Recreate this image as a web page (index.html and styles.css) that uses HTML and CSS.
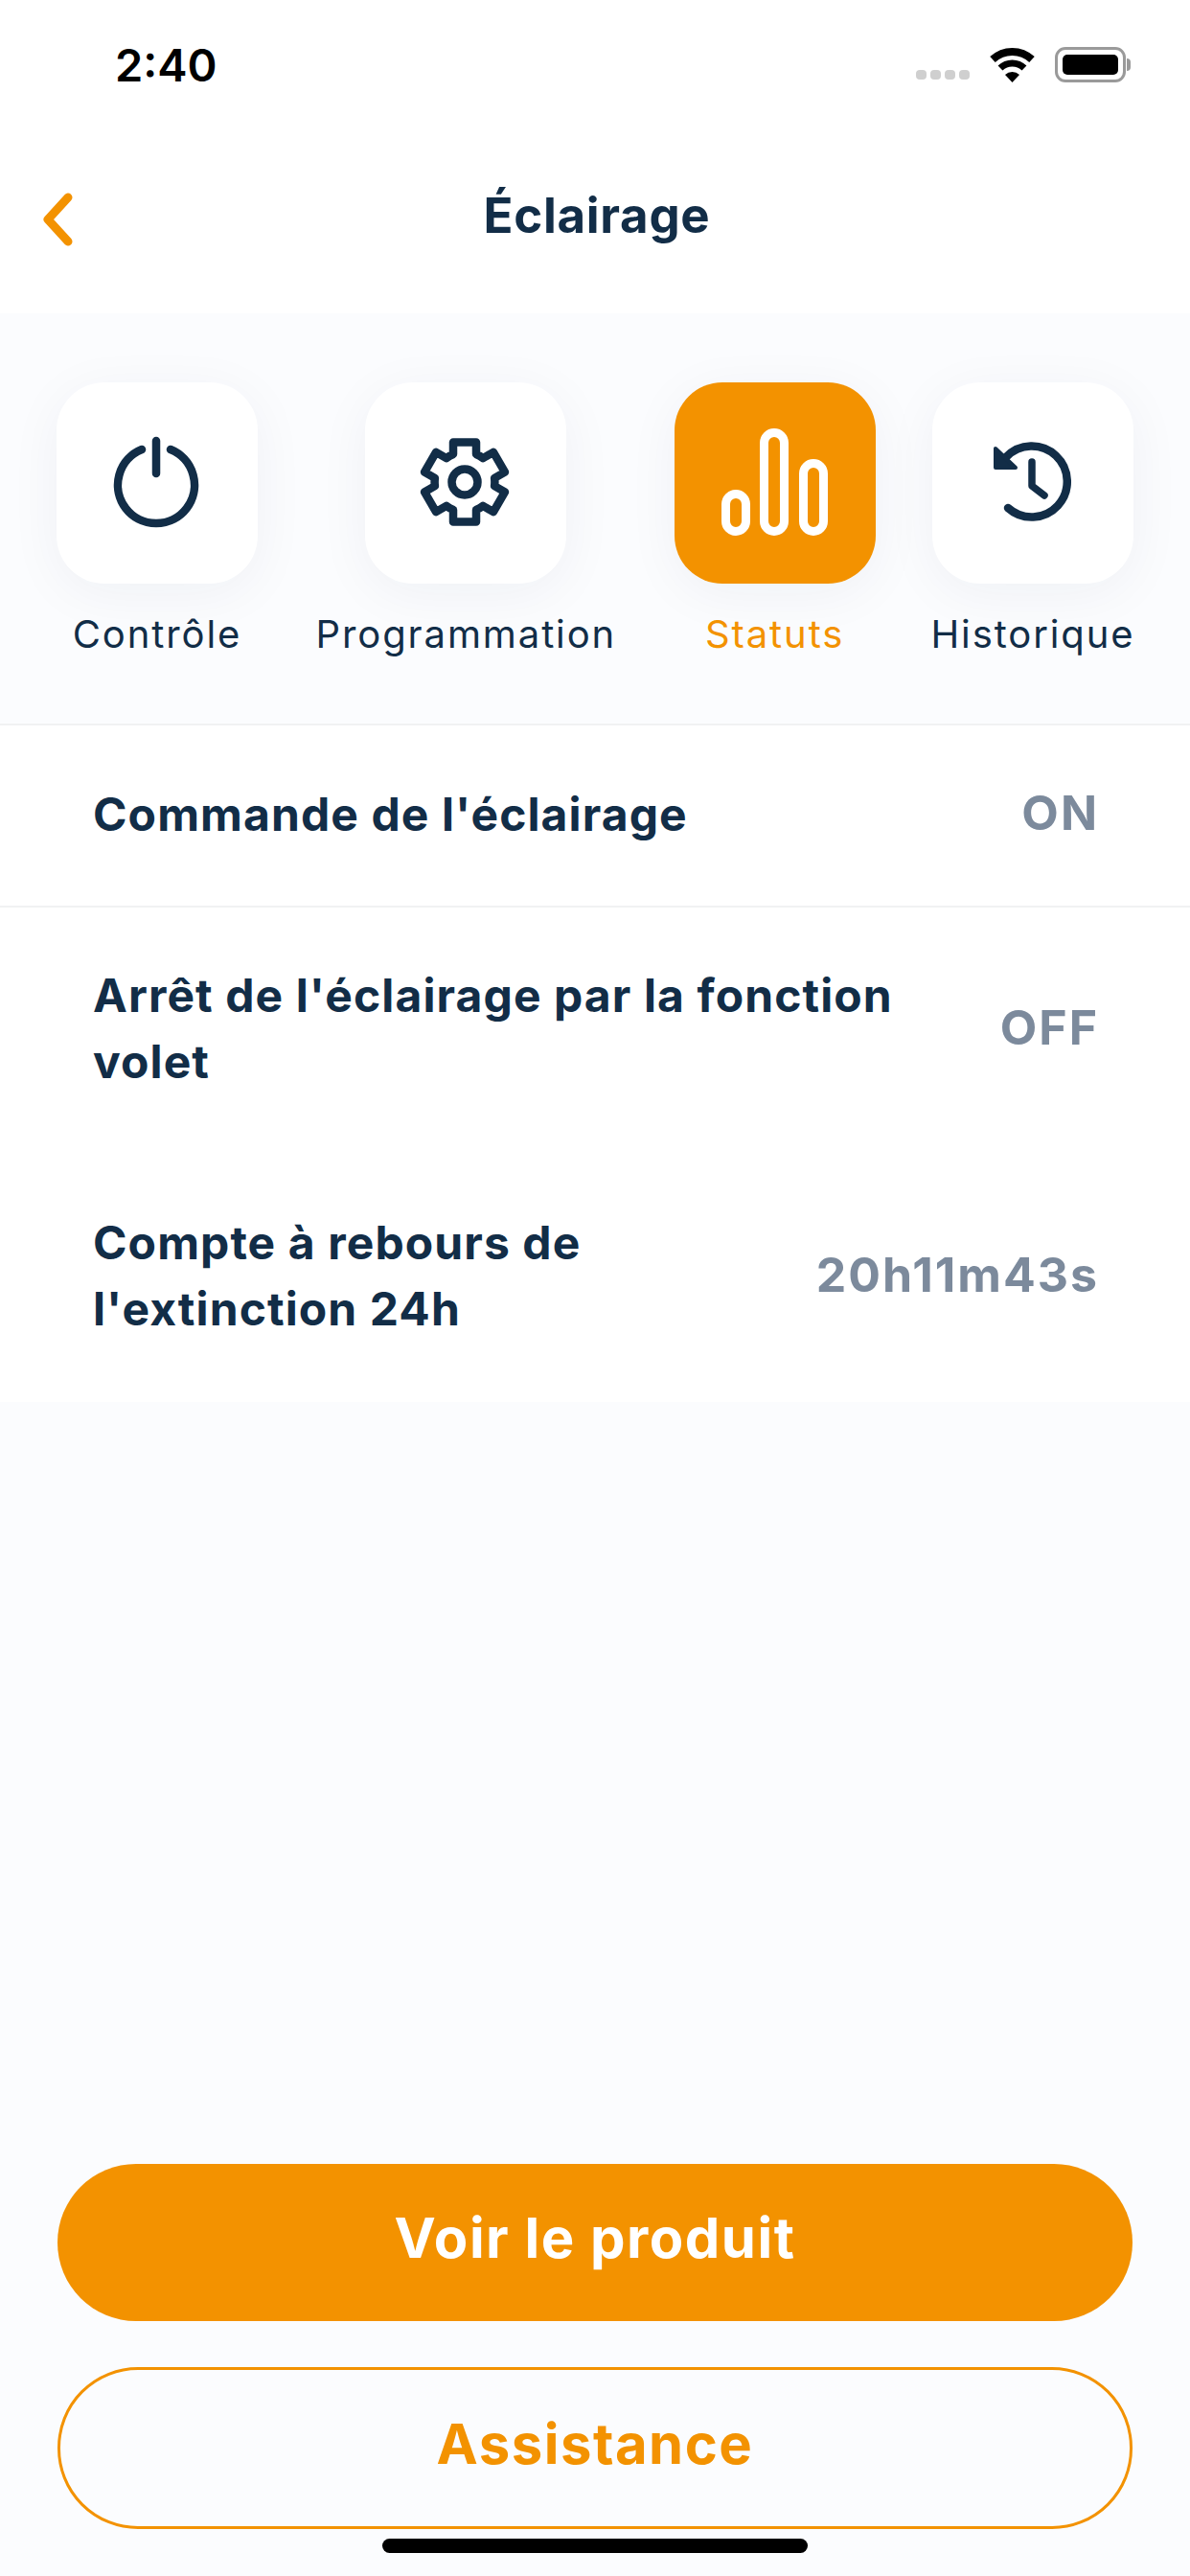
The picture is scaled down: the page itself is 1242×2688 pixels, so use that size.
FILE: index.html
```html
<!DOCTYPE html>
<html lang="fr">

<head>
  <meta charset="UTF-8">
  <meta name="viewport" content="width=device-width, initial-scale=1.0">
  <title>Éclairage</title>
  <link rel="stylesheet" href="styles.css">
</head>

<body>
  <div class="page">
    <header class="top">
      <div class="status">
        <span class="time">2:40</span>
        <div class="status-icons">
          <div class="signal"><i></i><i></i><i></i><i></i></div>
          <svg class="wifi" width="47" height="37" viewBox="0 0 47 37">
            <path d="M3 13 A30 30 0 0 1 44 13" fill="none" stroke="#000" stroke-width="8" />
            <path d="M11 22 A18 18 0 0 1 36 22" fill="none" stroke="#000" stroke-width="7" />
            <path d="M16 29 L23.500 37 L31 29 A11 11 0 0 0 16 29 Z" fill="#000" />
          </svg>
          <div class="battery"><div class="battery-level"></div></div>
        </div>
      </div>
      <nav class="nav">
        <svg class="back" width="34" height="56" viewBox="0 0 34 56">
          <path d="M28 5 L7 28 L28 51" fill="none" stroke="#f39200" stroke-width="9" stroke-linecap="round" stroke-linejoin="round" />
        </svg>
        <h1 class="title">Éclairage</h1>
      </nav>
    </header>

    <section class="tabs">
      <div class="tab">
        <div class="tile">
          <svg width="210" height="210" viewBox="0 0 210 210" fill="none" stroke="#122d47" stroke-width="8.500" stroke-linecap="round">
            <path d="M89 70 A40 40 0 1 0 119 70" />
            <path d="M104 61 V95" />
          </svg>
        </div>
        <span class="tab-label">Contrôle</span>
      </div>
      <div class="tab tab-wide">
        <div class="tile">
          <svg width="210" height="210" viewBox="0 0 210 210" fill="none" stroke="#122d47" stroke-width="8.500" stroke-linejoin="round">
            <g transform="translate(104 104)">
              <path d="M-12 -29 L-12 -41.500 L12 -41.500 L12 -29 A31.400 31.400 0 0 1 19.110 -24.890 L29.940 -31.140 L41.940 -10.360 L31.110 -4.110 A31.400 31.400 0 0 1 31.110 4.110 L41.940 10.360 L29.940 31.140 L19.110 24.890 A31.400 31.400 0 0 1 12 29 L12 41.500 L-12 41.500 L-12 29 A31.400 31.400 0 0 1 -19.110 24.890 L-29.940 31.140 L-41.940 10.360 L-31.110 4.110 A31.400 31.400 0 0 1 -31.110 -4.110 L-41.940 -10.360 L-29.940 -31.140 L-19.110 -24.890 A31.400 31.400 0 0 1 -12 -29 Z" />
              <circle r="13.500" />
            </g>
          </svg>
        </div>
        <span class="tab-label">Programmation</span>
      </div>
      <div class="tab tab-active">
        <div class="tile">
          <svg width="210" height="210" viewBox="0 0 210 210" fill="none" stroke="#fff" stroke-width="9">
            <rect x="53.500" y="116.500" width="21" height="39" rx="10.500" />
            <rect x="93.500" y="52.500" width="21" height="103" rx="10.500" />
            <rect x="134.500" y="84.500" width="21" height="71" rx="10.500" />
          </svg>
        </div>
        <span class="tab-label">Statuts</span>
      </div>
      <div class="tab">
        <div class="tile">
          <svg width="210" height="210" viewBox="0 0 210 210" fill="none" stroke="#122d47" stroke-width="8.500" stroke-linecap="round" stroke-linejoin="round">
            <path d="M77 78 A37 37 0 1 1 79 131" />
            <path d="M104 83 V108 L117 118" stroke-width="7.500" />
            <path d="M66 69 V89 H87 Z" fill="#122d47" stroke-width="4" />
          </svg>
        </div>
        <span class="tab-label">Historique</span>
      </div>
    </section>

    <section class="rows">
      <div class="row row-first">
        <span class="row-name">Commande de l'éclairage</span>
        <span class="row-value">ON</span>
      </div>
      <div class="row row-second">
        <span class="row-name">Arrêt de l'éclairage par la fonction volet</span>
        <span class="row-value">OFF</span>
      </div>
      <div class="row row-third">
        <span class="row-name row-name-short">Compte à rebours de l'extinction 24h</span>
        <span class="row-value">20h11m43s</span>
      </div>
    </section>

    <footer class="actions">
      <button class="btn btn-full">Voir le produit</button>
      <button class="btn btn-line">Assistance</button>
      <div class="home-bar"></div>
    </footer>
  </div>
</body>

</html>
```

FILE: styles.css
```css
* {
  margin: 0;
  padding: 0;
  box-sizing: border-box;
}

body {
  font-family: "Inter", "Liberation Sans", sans-serif;
  color: #122d47;
  background: #fbfcfe;
}

.page {
  position: relative;
  display: flex;
  flex-direction: column;
  width: 1242px;
  height: 2688px;
  overflow: hidden;
}

/* header */
.top {
  height: 327px;
  background: #fff;
}

.status {
  display: flex;
  justify-content: space-between;
  align-items: center;
  height: 134px;
  padding: 0 67px 0 120px;
}

.time {
  font-size: 47px;
  font-weight: 600;
  color: #000;
}

.status-icons {
  display: flex;
  align-items: center;
  gap: 21px;
}

.signal {
  display: flex;
  gap: 4px;
  align-self: flex-end;
  margin-bottom: 3px;
}

.signal i {
  width: 11px;
  height: 10px;
  border-radius: 4px;
  background: #cfcfcf;
}

.battery {
  position: relative;
  width: 74px;
  height: 37px;
  padding: 5px;
  border: 3px solid #9a9a9a;
  border-radius: 11px;
}

.battery::after {
  content: "";
  position: absolute;
  top: 9px;
  right: -8px;
  width: 4px;
  height: 13px;
  border-radius: 0 4px 4px 0;
  background: #9a9a9a;
}

.battery-level {
  height: 100%;
  border-radius: 5px;
  background: #000;
}

.nav {
  display: grid;
  grid-template-columns: 1fr auto 1fr;
  align-items: center;
  padding: 0 39px 0 43px;
  height: 180px;
}

.back {
  margin-top: 10px;
}

.title {
  font-size: 51px;
  font-weight: 700;
  line-height: 1;
  letter-spacing: 0.7px;
  padding-top: 1px;
}

/* tabs */
.tabs {
  display: flex;
  justify-content: space-between;
  height: 430px;
  padding: 72px 59px 0;
  border-bottom: 2px solid #f1f2f3;
}

.tab {
  display: flex;
  flex-direction: column;
  align-items: center;
  width: 210px;
}

.tab-wide {
  width: 316px;
}

.tile {
  flex-shrink: 0;
  width: 210px;
  height: 210px;
  border-radius: 50px;
  background: #fff;
  box-shadow: 0 10px 55px rgba(18, 45, 71, 0.05);
}

.tile svg {
  display: block;
}

.tab-label {
  margin-top: 25px;
  font-size: 40px;
  line-height: 56px;
  letter-spacing: 1.9px;
  white-space: nowrap;
}

.tab-active .tile {
  background: #f39200;
}

.tab-active .tab-label {
  color: #f39200;
}

/* rows */
.rows {
  background: #fff;
}

.row {
  display: flex;
  justify-content: space-between;
  align-items: center;
  gap: 60px;
  padding: 0 97px;
}

.row-first {
  height: 190px;
  padding-bottom: 6px;
  border-bottom: 2px solid #f1f2f3;
}

.row-second {
  height: 250px;
}

.row-third {
  height: 266px;
}

.row-name {
  max-width: 860px;
  margin-top: 2px;
  font-size: 48px;
  font-weight: 700;
  line-height: 69px;
  letter-spacing: 1.1px;
}

.row-name-short {
  max-width: 640px;
}

.row-value {
  flex-shrink: 0;
  margin-right: -2px;
  font-size: 50px;
  font-weight: 700;
  letter-spacing: 2px;
  color: #7c8a9c;
}

/* buttons */
.actions {
  display: flex;
  flex-direction: column;
  gap: 48px;
  margin-top: auto;
  padding: 0 60px 49px;
}

.btn {
  width: 100%;
  font-family: inherit;
  font-size: 58px;
  font-weight: 700;
  letter-spacing: 1.5px;
  border-radius: 84px;
  padding-bottom: 10px;
}

.btn-full {
  height: 164px;
  border: 0;
  color: #fff;
  background: #f39200;
}

.btn-line {
  height: 169px;
  border: 3px solid #f39200;
  color: #f39200;
  background: transparent;
}

.home-bar {
  position: absolute;
  left: 399px;
  bottom: 24px;
  width: 444px;
  height: 15px;
  border-radius: 8px;
  background: #000;
}
```
